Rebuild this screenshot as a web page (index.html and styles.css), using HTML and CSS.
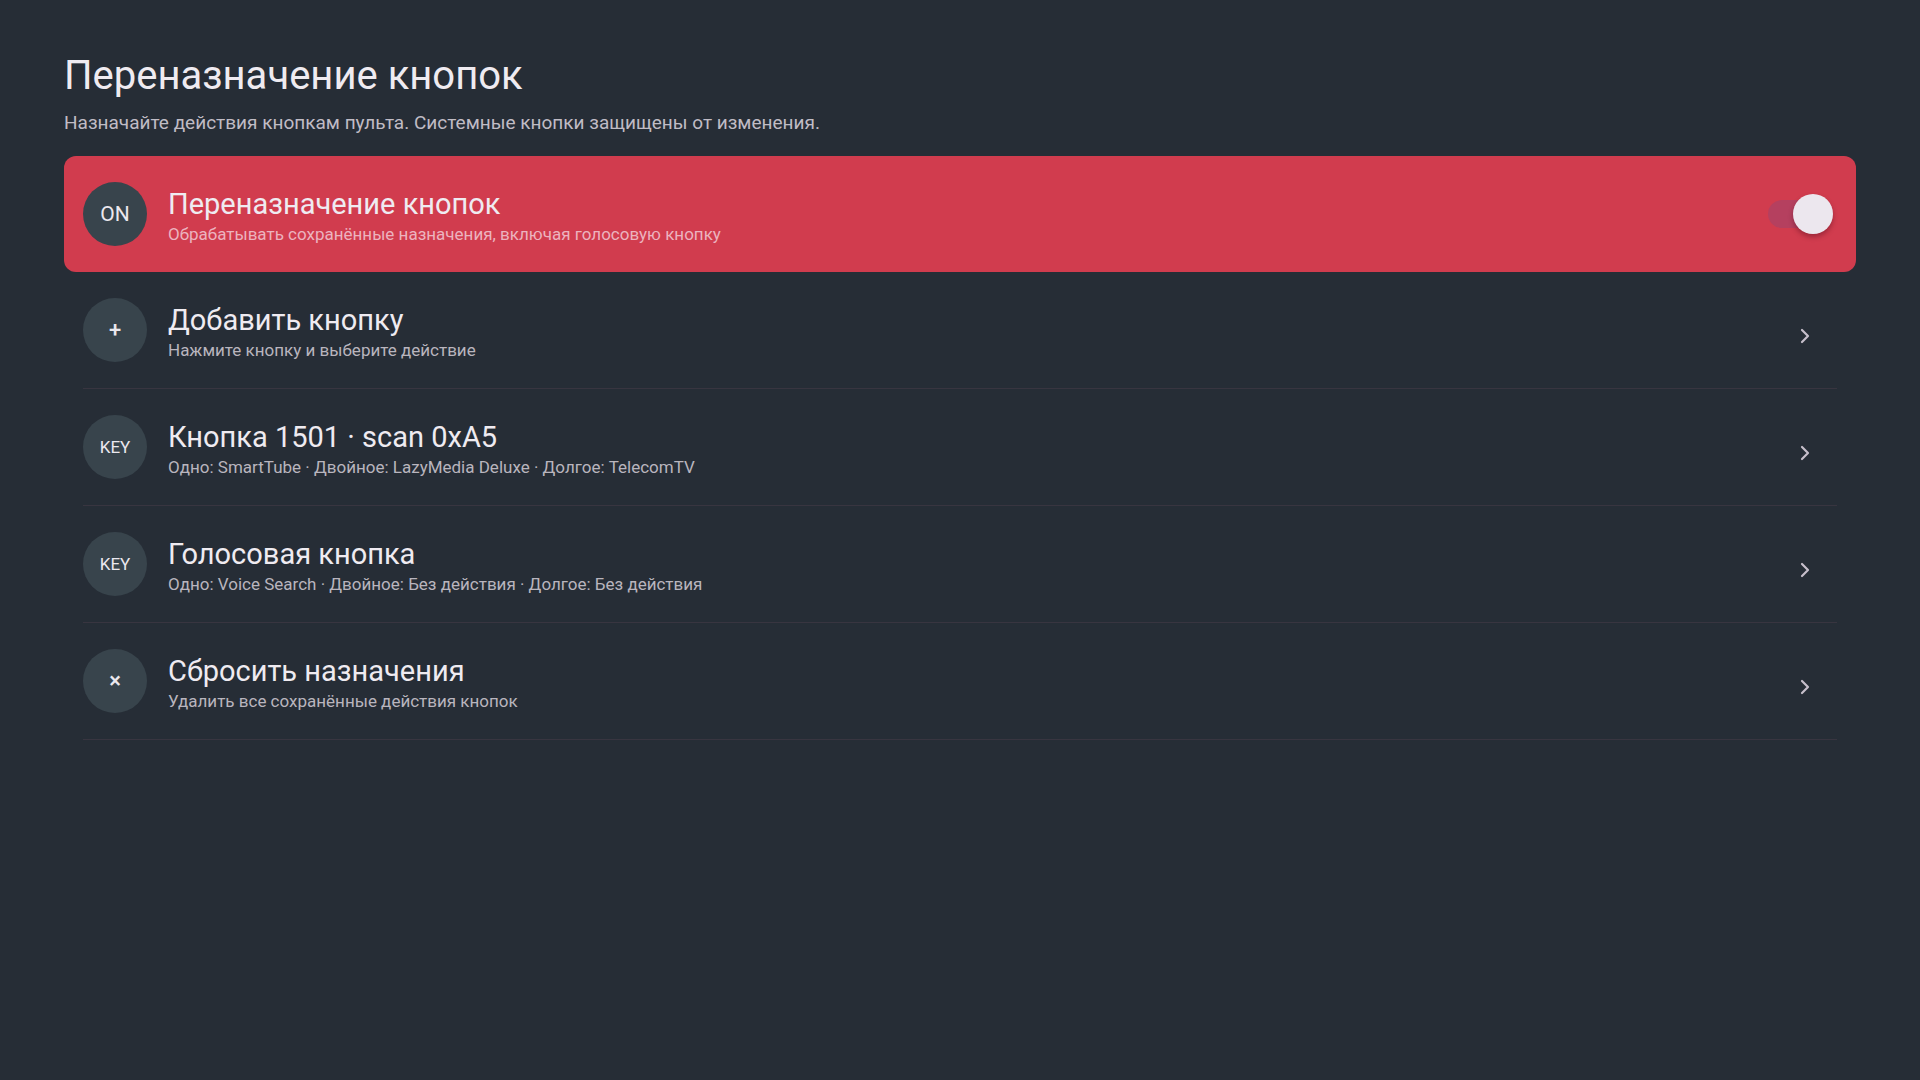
FILE: index.html
```html
<!DOCTYPE html>
<html lang="ru">
<head>
    <meta charset="UTF-8">
    <meta name="viewport" content="width=device-width, initial-scale=1.0">
    <title>Переназначение кнопок</title>
    <link rel="stylesheet" href="styles.css">
</head>
<body>
    <main class="screen">
        <h1 class="screen-title">Переназначение кнопок</h1>
        <p class="screen-hint">Назначайте действия кнопкам пульта. Системные кнопки защищены от изменения.</p>

        <ul class="menu">
            <li class="menu-item is-focused">
                <div class="menu-body">
                    <span class="badge">ON</span>
                    <div class="menu-text">
                        <div class="menu-title">Переназначение кнопок</div>
                        <div class="menu-sub">Обрабатывать сохранённые назначения, включая голосовую кнопку</div>
                    </div>
                    <span class="switch is-on"><span class="switch-thumb"></span></span>
                </div>
            </li>
            <li class="menu-item">
                <div class="menu-body">
                    <span class="badge badge-sign">+</span>
                    <div class="menu-text">
                        <div class="menu-title">Добавить кнопку</div>
                        <div class="menu-sub">Нажмите кнопку и выберите действие</div>
                    </div>
                    <svg class="chevron" viewBox="0 0 10 16"><polyline points="2,2 8,8 2,14"/></svg>
                </div>
            </li>
            <li class="menu-item">
                <div class="menu-body">
                    <span class="badge badge-small">KEY</span>
                    <div class="menu-text">
                        <div class="menu-title">Кнопка 1501 · scan 0xA5</div>
                        <div class="menu-sub">Одно: SmartTube · Двойное: LazyMedia Deluxe · Долгое: TelecomTV</div>
                    </div>
                    <svg class="chevron" viewBox="0 0 10 16"><polyline points="2,2 8,8 2,14"/></svg>
                </div>
            </li>
            <li class="menu-item">
                <div class="menu-body">
                    <span class="badge badge-small">KEY</span>
                    <div class="menu-text">
                        <div class="menu-title">Голосовая кнопка</div>
                        <div class="menu-sub">Одно: Voice Search · Двойное: Без действия · Долгое: Без действия</div>
                    </div>
                    <svg class="chevron" viewBox="0 0 10 16"><polyline points="2,2 8,8 2,14"/></svg>
                </div>
            </li>
            <li class="menu-item">
                <div class="menu-body">
                    <span class="badge badge-sign">×</span>
                    <div class="menu-text">
                        <div class="menu-title">Сбросить назначения</div>
                        <div class="menu-sub">Удалить все сохранённые действия кнопок</div>
                    </div>
                    <svg class="chevron" viewBox="0 0 10 16"><polyline points="2,2 8,8 2,14"/></svg>
                </div>
            </li>
        </ul>
    </main>
</body>
</html>
```

FILE: styles.css
```css
html, body {
    margin: 0;
    padding: 0;
    background: #262d36;
}
body {
    font-family: Roboto, 'Noto Sans', sans-serif;
    color: #eeeaf0;
    min-height: 100vh;
}
.screen {
    padding: 52px 64px 0 64px;
}
.screen-title {
    margin: 0;
    font-size: 40px;
    font-weight: 400;
    line-height: 48px;
    color: #efebf1;
}
.screen-hint {
    margin: 12px 0 21px 0;
    font-size: 19px;
    line-height: 1.2;
    color: #c0bcc5;
}

/* list of settings rows */
.menu {
    list-style: none;
    margin: 0;
    padding: 0;
}
.menu-item {
    padding: 0 19px;
    border-radius: 12px;
}
.menu-body {
    display: flex;
    align-items: center;
    gap: 21px;
    height: 116px;
    border-bottom: 1px solid #383540;
}
.menu-item.is-focused {
    background: #d13c4e;
}
.menu-item.is-focused .menu-body {
    border-bottom: none;
}
.badge {
    flex: 0 0 64px;
    width: 64px;
    height: 64px;
    border-radius: 50%;
    background: #38444c;
    color: #ebe8ee;
    font-size: 21px;
    display: flex;
    align-items: center;
    justify-content: center;
}
.badge-small {
    font-size: 17px;
}
.badge-sign {
    font-size: 22px;
    font-weight: 500;
}
.menu-text {
    flex: 1;
    padding-top: 6px;
}
.menu-title {
    font-size: 29px;
    line-height: 32px;
    color: #efebf1;
}
.menu-sub {
    margin-top: 3px;
    font-size: 17px;
    line-height: 22px;
    color: #b9b5be;
}
.is-focused .menu-sub {
    color: #ecb3bf;
}
.chevron {
    width: 10px;
    height: 16px;
    margin: 12px 27px 0 0;
    fill: none;
    stroke: #c6bfcb;
    stroke-width: 2.2;
    stroke-linecap: round;
    stroke-linejoin: round;
}

/* on/off switch */
.switch {
    position: relative;
    width: 62px;
    height: 28px;
    margin-right: 7px;
    border-radius: 14px;
    background: #b5405f;
}
.switch-thumb {
    position: absolute;
    top: -6px;
    right: -3px;
    width: 40px;
    height: 40px;
    border-radius: 50%;
    background: #ece7ee;
    box-shadow: 0 3px 5px rgba(60, 0, 20, 0.35);
}
```
